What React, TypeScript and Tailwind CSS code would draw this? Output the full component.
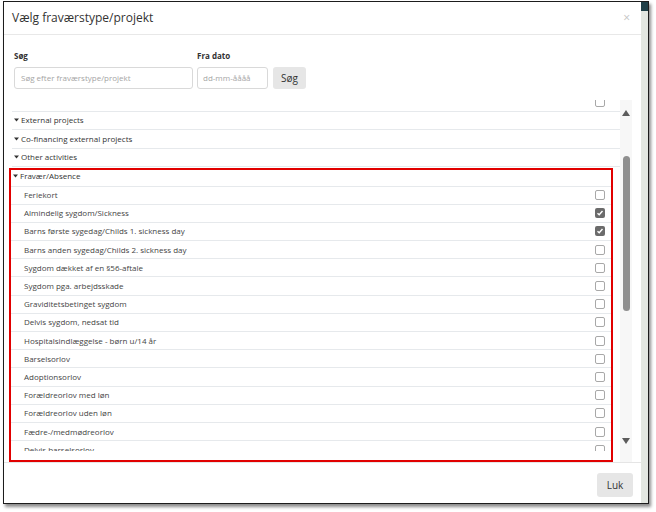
import React from "react";

const ITEMS: { label: string; checked?: boolean }[] = [
  { label: "Feriekort" },
  { label: "Almindelig sygdom/Sickness", checked: true },
  { label: "Barns første sygedag/Childs 1. sickness day", checked: true },
  { label: "Barns anden sygedag/Childs 2. sickness day" },
  { label: "Sygdom dækket af en §56-aftale" },
  { label: "Sygdom pga. arbejdsskade" },
  { label: "Graviditetsbetinget sygdom" },
  { label: "Delvis sygdom, nedsat tid" },
  { label: "Hospitalsindlæggelse - børn u/14 år" },
  { label: "Barselsorlov" },
  { label: "Adoptionsorlov" },
  { label: "Forældreorlov med løn" },
  { label: "Forældreorlov uden løn" },
  { label: "Fædre-/medmødreorlov" },
  { label: "Delvis barselsorlov" },
];

const CATEGORIES = ["External projects", "Co-financing external projects", "Other activities"];

function Checkbox({ checked }: { checked?: boolean }) {
  if (checked) {
    return (
      <span className="w-[10px] h-[10px] rounded-[2px] bg-[#6b6b6b] flex items-center justify-center shrink-0">
        <svg width="8" height="8" viewBox="0 0 8 8">
          <path d="M1.5 4.2 L3.2 5.8 L6.5 2" fill="none" stroke="#fff" strokeWidth="1.4" />
        </svg>
      </span>
    );
  }
  return <span className="w-[10px] h-[10px] rounded-[2px] border border-[#a8a8a8] bg-white shrink-0" />;
}

function Caret() {
  return (
    <svg width="5" height="4" viewBox="0 0 5 4" className="shrink-0">
      <path d="M0 0.5 L5 0.5 L2.5 3.5 Z" fill="#333" />
    </svg>
  );
}

export default function App() {
  return (
    <div className="w-[656px] h-[512px] bg-white overflow-hidden" style={{ fontFamily: '"Open Sans", "Liberation Sans", sans-serif' }}>
      <div className="ml-[3px] mt-[1px] w-[646px] h-[503px] border border-[#1c1c1c] shadow-[2px_3px_3px_rgba(0,0,0,0.45)] flex">
        {/* modal */}
        <div className="w-[637px] h-full bg-white flex flex-col">
          <div className="h-[33px] border-b border-[#e8e8e8] flex items-center justify-between pl-[8px] pr-[11px] shrink-0">
            <span className="text-[12px] text-[#333] leading-none">Vælg fraværstype/projekt</span>
            <span className="text-[12px] text-[#c4c4c4] leading-none">×</span>
          </div>

          <div className="pl-[10px] pt-[15px] pb-[11px] shrink-0 flex items-end gap-[4px]">
            <div className="flex flex-col">
              <span className="h-[12px] text-[8px] font-bold text-[#333] leading-[12px] mb-[5px]">Søg</span>
              <div className="w-[179px] h-[22px] border border-[#d9d9d9] rounded-[3px] flex items-center pl-[6px]">
                <span className="text-[8px] text-[#a5a5a5]">Søg efter fraværstype/projekt</span>
              </div>
            </div>
            <div className="flex flex-col">
              <span className="h-[12px] text-[8px] font-bold text-[#333] leading-[12px] mb-[5px]">Fra dato</span>
              <div className="w-[71px] h-[22px] border border-[#d9d9d9] rounded-[3px] flex items-center pl-[5px]">
                <span className="text-[8px] text-[#a5a5a5]">dd-mm-åååå</span>
              </div>
            </div>
            <div className="ml-[1px] w-[33px] h-[22px] rounded-[3px] bg-[#e6e6e6] flex items-center justify-center">
              <span className="text-[10px] text-[#333]">Søg</span>
            </div>
          </div>

          {/* list area */}
          <div className="h-[362px] flex pl-[5px] pr-[9px] shrink-0">
            <div className="flex-1 overflow-hidden">
              <div className="mt-[-7px]">
                <div className="ml-[3px] h-[18.5px] border-b border-[#e6e9ec] flex items-center justify-end pr-[15px]">
                  <Checkbox />
                </div>
                {CATEGORIES.map((c) => (
                  <div key={c} className="ml-[3px] h-[18.5px] border-b border-[#e6e9ec] flex items-center gap-[2px] pl-[2px]">
                    <Caret />
                    <span className="text-[8px] text-[#333] leading-none">{c}</span>
                  </div>
                ))}
                <div className="mt-[1px] mr-[7px] h-[294px] border-[2.5px] border-[#e10000]">
                  <div className="h-[281px] overflow-hidden">
                    <div className="h-[16.5px] pb-[3px] border-b border-[#e6e9ec] flex items-center gap-[2px] pl-[2px]">
                      <Caret />
                      <span className="text-[8px] text-[#333] leading-none">Fravær/Absence</span>
                    </div>
                    {ITEMS.map((it) => (
                      <div key={it.label} className="h-[18.2px] border-b border-[#e6e9ec] flex items-center justify-between pl-[13px] pr-[6px]">
                        <span className="text-[8px] text-[#444] leading-none">{it.label}</span>
                        <Checkbox checked={it.checked} />
                      </div>
                    ))}
                  </div>
                </div>
              </div>
            </div>
            {/* scrollbar */}
            <div className="w-[12px] bg-[#f7f7f7] flex flex-col items-center pt-[10px] pb-[18px]">
              <svg width="8" height="6" viewBox="0 0 8 6">
                <path d="M0 6 L4 0 L8 6 Z" fill="#5c5c5c" />
              </svg>
              <div className="mt-[40px] w-[7px] h-[155px] rounded-full bg-[#8f8f8f]" />
              <div className="flex-1" />
              <svg width="8" height="6" viewBox="0 0 8 6">
                <path d="M0 0 L8 0 L4 6 Z" fill="#5c5c5c" />
              </svg>
            </div>
          </div>

          <div className="flex-1 border-t border-[#e5e5e5] flex items-start justify-end pt-[10px] pr-[8px]">
            <div className="w-[36px] h-[24px] rounded-[3px] bg-[#e6e6e6] flex items-center justify-center">
              <span className="text-[10px] text-[#333]">Luk</span>
            </div>
          </div>
        </div>
        {/* background strip behind modal */}
        <div className="flex-1 bg-[#e3e7e1] flex flex-col">
          <div className="h-[9px] bg-[#1f3f47]" />
        </div>
      </div>
    </div>
  );
}
